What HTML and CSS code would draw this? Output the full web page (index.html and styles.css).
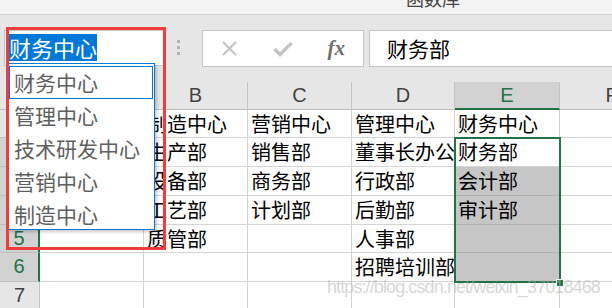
FILE: index.html
```html
<!DOCTYPE html>
<html lang="zh-CN">
<head>
    <meta charset="UTF-8">
    <title>数据验证下拉列表</title>
    <link rel="stylesheet" href="styles.css">
</head>
<body>
    <div class="titlebar"><span class="title">函数库</span></div>

    <div class="toolbar">
        <div class="namebox"><span class="sel">财务中心</span></div>
        <div class="grip"><i></i><i></i><i></i></div>
        <div class="fxbox">
            <div class="btn">
                <svg width="17" height="16" viewBox="0 0 17 16"><path d="M2 1 L15 14 M15 1 L2 14" stroke="#c4c4c4" stroke-width="2.2" fill="none"/></svg>
            </div>
            <div class="btn">
                <svg width="20" height="16" viewBox="0 0 20 16"><path d="M1.5 8 L7 13.5 L18.5 2" stroke="#c4c4c4" stroke-width="3.4" fill="none"/></svg>
            </div>
            <div class="btn"><span class="fx">fx</span></div>
        </div>
        <div class="formula">财务部</div>
    </div>

    <div class="sheet">
        <div class="c rh"></div><div class="c ch">A</div><div class="c ch">B</div><div class="c ch">C</div><div class="c ch">D</div><div class="c ch on">E</div><div class="c ch">F</div>

        <div class="c rh">1</div><div class="c"></div><div class="c">制造中心</div><div class="c">营销中心</div><div class="c">管理中心</div><div class="c">财务中心</div><div class="c"></div>
        <div class="c rh on">2</div><div class="c"></div><div class="c">生产部</div><div class="c">销售部</div><div class="c">董事长办公室</div><div class="c">财务部</div><div class="c"></div>
        <div class="c rh on">3</div><div class="c"></div><div class="c">设备部</div><div class="c">商务部</div><div class="c">行政部</div><div class="c g">会计部</div><div class="c"></div>
        <div class="c rh on">4</div><div class="c"></div><div class="c">工艺部</div><div class="c">计划部</div><div class="c">后勤部</div><div class="c g">审计部</div><div class="c"></div>
        <div class="c rh on">5</div><div class="c"></div><div class="c">质管部</div><div class="c"></div><div class="c">人事部</div><div class="c g"></div><div class="c"></div>
        <div class="c rh on">6</div><div class="c"></div><div class="c"></div><div class="c"></div><div class="c">招聘培训部</div><div class="c g"></div><div class="c"></div>
        <div class="c rh">7</div><div class="c"></div><div class="c"></div><div class="c"></div><div class="c"></div><div class="c"></div><div class="c"></div>
    </div>

    <!-- selecao E2:E6 -->
    <div class="selection"></div>
    <div class="handle"></div>

    <!-- lista suspensa -->
    <div class="dropdown">
        <div class="item focus">财务中心</div>
        <div class="item">管理中心</div>
        <div class="item">技术研发中心</div>
        <div class="item">营销中心</div>
        <div class="item">制造中心</div>
    </div>

    <div class="callout"></div>
    <div class="watermark">https://blog.csdn.net/weixin_37018468</div>
</body>
</html>
```

FILE: styles.css
```css
body {
    margin: 0;
    width: 612px;
    height: 308px;
    overflow: hidden;
    position: relative;
    background: #fff;
    font-family: "Noto Sans CJK SC", sans-serif;
}
.titlebar {
    height: 14px;
    background: #f3f3f3;
    border-bottom: 1px solid #d2d2d2;
    padding-left: 406px;
    overflow: hidden;
    font-size: 18px;
    line-height: 18px;
    color: #444;
}
.title {
    display: block;
    margin-top: -11px;
}
.toolbar {
    height: 67px;
    box-sizing: border-box;
    padding-top: 15px;
    background: #e6e6e6;
    display: flex;
    align-items: flex-start;
}
.namebox {
    margin-left: 4px;
    width: 161px;
    height: 36px;
    box-sizing: border-box;
    padding: 3px 0 0 4px;
    background: #fff;
    border: 1px solid #c6c6c6;
}
.sel {
    display: inline-block;
    background: #0078d7;
    color: #fff;
    font-size: 22px;
    line-height: 27px;
}
.grip {
    margin: 10px 0 0 12px;
    display: flex;
    flex-direction: column;
    gap: 3px;
}
.grip i {
    width: 3px;
    height: 3px;
    background: #b4b4b4;
}
.fxbox {
    margin-left: 22px;
    width: 162px;
    height: 37px;
    box-sizing: border-box;
    background: #fff;
    border: 1px solid #c6c6c6;
    display: flex;
}
.btn {
    flex: 1;
    display: flex;
    align-items: center;
    justify-content: center;
}
.fx {
    font-family: "Liberation Serif", serif;
    font-style: italic;
    font-weight: bold;
    font-size: 21px;
    color: #6f6f6f;
}
.formula {
    flex: 1;
    margin-left: 5px;
    height: 37px;
    box-sizing: border-box;
    background: #fff;
    border: 1px solid #c6c6c6;
    border-right: none;
    padding-left: 17px;
    font-size: 21px;
    line-height: 35px;
    color: #000;
}
.sheet {
    width: 612px;
    overflow: hidden;
    display: grid;
    grid-template-columns: 40px 104px 104px 104px 103px 105px 104px;
    grid-template-rows: 28px 28px 29px 29px 29px 28px 29px 28px;
}
.c {
    box-sizing: border-box;
    border-right: 1px solid #d4d4d4;
    border-bottom: 1px solid #d4d4d4;
    padding-left: 3px;
    font-size: 20px;
    line-height: 27px;
    white-space: nowrap;
    overflow: hidden;
    color: #000;
}
.ch, .rh {
    padding: 0;
    text-align: center;
    background: #e6e6e6;
    border-right-color: #c4c4c4;
    border-bottom-color: #bfbfbf;
    font-family: "Liberation Sans", sans-serif;
    color: #444;
}
.ch.on {
    background: #d2d2d2;
    color: #217346;
    border-bottom: 2px solid #217346;
}
.rh.on {
    background: #d2d2d2;
    color: #217346;
    border-right: 2px solid #217346;
}
.g {
    background: #c6c6c6;
    border-bottom-color: #b2b2b2;
}
.selection {
    position: absolute;
    left: 454px;
    top: 137px;
    width: 107px;
    height: 146px;
    box-sizing: border-box;
    border: 2px solid #217346;
}
.handle {
    position: absolute;
    left: 556px;
    top: 279px;
    width: 6px;
    height: 6px;
    background: #217346;
    border-left: 1px solid #fff;
    border-top: 1px solid #fff;
}
.dropdown {
    position: absolute;
    left: 7px;
    top: 63px;
    width: 148px;
    height: 167px;
    box-sizing: border-box;
    padding-top: 2px;
    background: #fff;
    border: 1px solid #0078d7;
    box-shadow: 2px 2px 3px rgba(0, 0, 0, 0.2);
}
.item {
    height: 33px;
    box-sizing: border-box;
    margin: 0 1px;
    padding-left: 4px;
    border: 1px solid transparent;
    font-size: 21px;
    line-height: 30px;
    color: #5f5f5f;
    white-space: nowrap;
}
.item.focus {
    border-color: #0078d7;
}
.callout {
    position: absolute;
    left: 6px;
    top: 27px;
    width: 160px;
    height: 223px;
    box-sizing: border-box;
    border: 3px solid #f03c3c;
}
.watermark {
    position: absolute;
    left: 327px;
    top: 277px;
    font-family: "Liberation Sans", sans-serif;
    font-size: 18px;
    letter-spacing: -0.9px;
    color: rgba(180, 180, 180, 0.55);
    white-space: nowrap;
}
```
